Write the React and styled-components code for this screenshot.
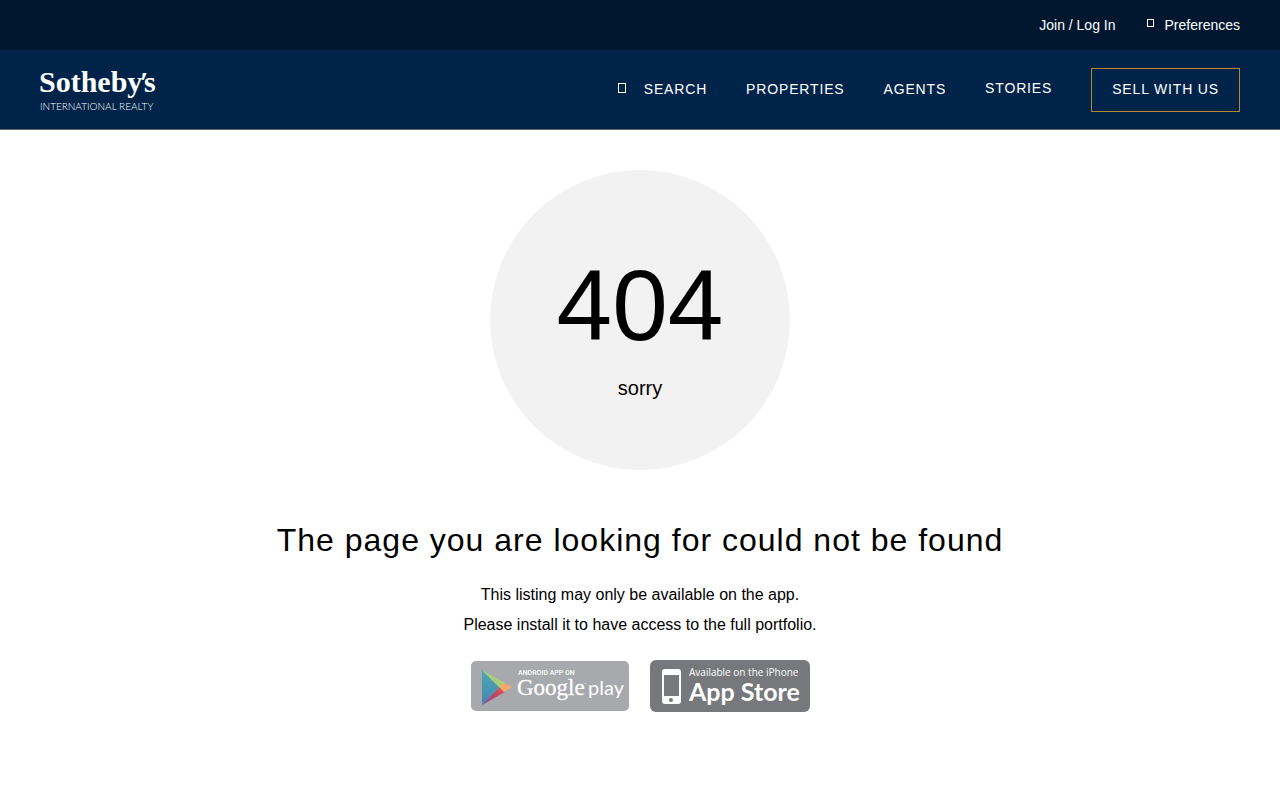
import styled, { createGlobalStyle } from "styled-components";

export default function App() {
    return (
        <>
            <GlobalStyle />
            <header>
                <TopBar>
                    <TopLink href="#login">Join / Log In</TopLink>
                    <TopLink href="#preferences">
                        <SmallGlyph />
                        Preferences
                    </TopLink>
                </TopBar>
                <MainBar>
                    <Logo />
                    <Navbar>
                        <NavLink href="#search">
                            <Glyph />
                            SEARCH
                        </NavLink>
                        <NavLink href="#properties">PROPERTIES</NavLink>
                        <NavLink href="#agents">AGENTS</NavLink>
                        <NavButton type="button">STORIES</NavButton>
                        <SellLink href="#sell">SELL WITH US</SellLink>
                    </Navbar>
                </MainBar>
            </header>
            <Content>
                <Circle>
                    <Code>404</Code>
                    <Sorry>sorry</Sorry>
                </Circle>
                <Title>The page you are looking for could not be found</Title>
                <Text>This listing may only be available on the app.</Text>
                <Text>Please install it to have access to the full portfolio.</Text>
                <Stores>
                    <a href="#google-play" aria-label="Google play">
                        <GooglePlayBadge />
                    </a>
                    <a href="#app-store" aria-label="App Store">
                        <AppStoreBadge />
                    </a>
                </Stores>
            </Content>
        </>
    );
}

function Logo() {
    return (
        <LogoLink href="#home" aria-label="Sotheby's International Realty">
            <svg width="124" height="48" viewBox="0 0 124 48" fill="#fff">
                <text x="-1" y="26" fontFamily="'Liberation Serif', serif" fontSize="30" fontWeight="700">
                    Sotheby<tspan x="100">′</tspan><tspan x="104">s</tspan>
                </text>
                <text x="0" y="44" fontFamily="Lato, sans-serif" fontSize="10" fontWeight="300">INTERNATIONAL REALTY</text>
            </svg>
        </LogoLink>
    );
}

function GooglePlayBadge() {
    return (
        <svg width="160" height="52" viewBox="0 0 160 52">
            <defs>
                <linearGradient id="play-blue" x1="0" y1="0" x2="0" y2="1">
                    <stop offset="0" stopColor="#4fa9ad" />
                    <stop offset="0.6" stopColor="#4a93b4" />
                    <stop offset="1" stopColor="#4f7fb0" />
                </linearGradient>
                <linearGradient id="play-red" x1="0" y1="1" x2="1" y2="0">
                    <stop offset="0" stopColor="#7c4a98" />
                    <stop offset="0.6" stopColor="#c8455f" />
                    <stop offset="1" stopColor="#dc5b58" />
                </linearGradient>
            </defs>
            <rect x="1" y="1" width="158" height="50" rx="5" fill="#a7a9ac" />
            <path d="M12 10 L30 28 L12 45 Z" fill="url(#play-blue)" />
            <path d="M12 10 L35 23 L30 28 Z" fill="#a9cf7b" />
            <path d="M12 45 L30 27 L35 32 Z" fill="url(#play-red)" />
            <path d="M34 23 L42 27 L34 32 L29 27 Z" fill="#f5a96a" />
            <g fill="#fff">
                <text x="48" y="15" fontFamily="Roboto, sans-serif" fontSize="7" fontWeight="500">ANDROID APP ON</text>
                <text x="47" y="35" fontFamily="'Liberation Serif', serif" fontSize="23" stroke="#fff" strokeWidth="0.3">Google</text>
                <text x="114" y="25" fontFamily="'Open Sans', sans-serif" fontSize="3">™</text>
                <text x="118" y="35" fontFamily="Lato, sans-serif" fontSize="20">play</text>
            </g>
        </svg>
    );
}

function AppStoreBadge() {
    return (
        <svg width="160" height="52" viewBox="0 0 160 52">
            <rect width="160" height="52" rx="6" fill="#77787b" />
            <rect x="12" y="9" width="19" height="35" rx="3" fill="#fff" />
            <rect x="14" y="15" width="15" height="21" fill="#77787b" />
            <circle cx="21" cy="40" r="2" fill="#77787b" />
            <g fill="#fff">
                <text x="39" y="16" fontFamily="'Open Sans', sans-serif" fontSize="10" fontWeight="500">Available on the iPhone</text>
                <text x="39" y="41" fontFamily="Lato, sans-serif" fontSize="25" fontWeight="700">App Store</text>
            </g>
        </svg>
    );
}

const GlobalStyle = createGlobalStyle`
    * {
        box-sizing: border-box;
    }

    body {
        margin: 0;
        background: #fff;
        color: #000;
        font-family: "Liberation Sans", Arial, sans-serif;
        font-size: 16px;
    }

    svg {
        display: block;
    }
`;

const TopBar = styled.div`
    display: flex;
    align-items: center;
    justify-content: flex-end;
    gap: 31px;
    height: 50px;
    padding: 0 40px;
    background: #00172f;
`;

const TopLink = styled.a`
    display: flex;
    align-items: center;
    gap: 11px;
    color: #fff;
    font-size: 14px;
    line-height: 16px;
    text-decoration: none;
`;

const Glyph = styled.span`
    width: 8px;
    height: 10px;
    margin: 0 18px 2px 0;
    border: 1px solid #fff;
`;

const SmallGlyph = styled.span`
    width: 7px;
    height: 8px;
    margin-bottom: 4px;
    border: 1px solid #fff;
`;

const MainBar = styled.div`
    display: flex;
    align-items: center;
    justify-content: space-between;
    height: 80px;
    padding: 0 40px;
    background: #002349;
    border-bottom: 1px solid #666666;
`;

const LogoLink = styled.a`
    display: block;
`;

const Navbar = styled.nav`
    display: flex;
    align-items: center;
    gap: 39px;
`;

const NavLink = styled.a`
    display: flex;
    align-items: center;
    padding-bottom: 2px;
    color: #fff;
    font-size: 14px;
    line-height: 16px;
    letter-spacing: 0.06em;
    text-decoration: none;
`;

const NavButton = styled.button`
    padding: 0 0 4px;
    border: none;
    background: none;
    color: #fff;
    font-family: inherit;
    font-size: 14px;
    line-height: 16px;
    letter-spacing: 0.06em;
    cursor: pointer;
`;

const SellLink = styled(NavLink)`
    height: 44px;
    padding: 0 20px 2px;
    border: 1px solid #b4892e;
`;

const Content = styled.main`
    display: flex;
    flex-direction: column;
    align-items: center;
    padding: 40px;
    text-align: center;
`;

const Circle = styled.div`
    display: flex;
    flex-direction: column;
    align-items: center;
    width: 300px;
    height: 300px;
    padding-top: 77px;
    border-radius: 50%;
    background: #f2f2f2;
`;

const Code = styled.div`
    font-size: 100px;
    line-height: 116px;
`;

const Sorry = styled.div`
    margin-top: 13px;
    font-size: 20px;
    line-height: 24px;
`;

const Title = styled.h1`
    margin: 50px 0 20px;
    font-size: 32px;
    font-weight: 400;
    line-height: 40px;
    letter-spacing: 1px;
`;

const Text = styled.p`
    margin: 0;
    line-height: 30px;
`;

const Stores = styled.div`
    display: flex;
    gap: 20px;
    margin-top: 20px;
`;
